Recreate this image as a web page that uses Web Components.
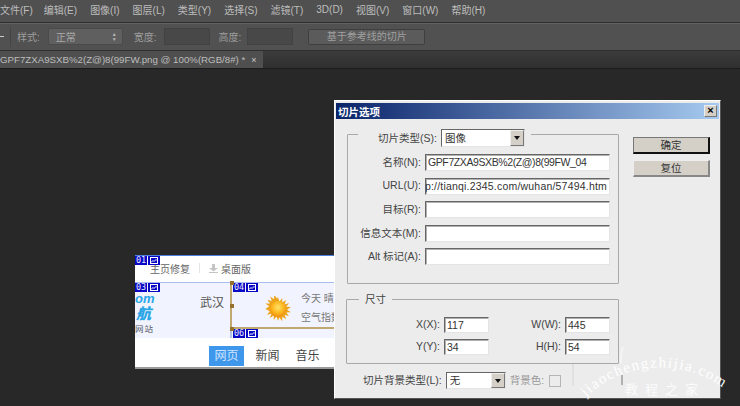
<!DOCTYPE html>
<html>
<head>
<meta charset="utf-8">
<title>切片选项</title>
<style>
  html, body { margin: 0; height: 100%; background: #282828; }
  body { width: 740px; height: 406px; overflow: hidden; font-family: "Liberation Sans", "Noto Sans CJK SC", sans-serif; display: flex; flex-direction: column; }
</style>
</head>
<body>
<ps-menubar>
  <ps-menu style="margin-right:-2px">文件(F)</ps-menu><ps-menu>编辑(E)</ps-menu><ps-menu>图像(I)</ps-menu><ps-menu>图层(L)</ps-menu><ps-menu>类型(Y)</ps-menu><ps-menu>选择(S)</ps-menu><ps-menu>滤镜(T)</ps-menu><ps-menu>3D(D)</ps-menu><ps-menu>视图(V)</ps-menu><ps-menu>窗口(W)</ps-menu><ps-menu>帮助(H)</ps-menu>
</ps-menubar>
<ps-options></ps-options>
<ps-tabbar>GPF7ZXA9SXB%2(Z@)8(99FW.png @ 100%(RGB/8#) *</ps-tabbar>
<ps-canvas>
  <slice-doc></slice-doc>
  <slice-dialog></slice-dialog>
  <water-mark></water-mark>
</ps-canvas>

<script>
  const CJK = `"Liberation Sans", "Noto Sans CJK SC", sans-serif`;

  customElements.define('ps-menu', class extends HTMLElement {
    connectedCallback() {
      this.attachShadow({mode: 'open'});
      this.shadowRoot.innerHTML = `
        <style>:host { display: block; white-space: nowrap; }</style>
        <slot></slot>`;
    }
  });

  customElements.define('ps-menubar', class extends HTMLElement {
    connectedCallback() {
      this.attachShadow({mode: 'open'});
      this.shadowRoot.innerHTML = `
        <style>
          :host {
            display: flex; flex: none; align-items: center; gap: 13px; box-sizing: border-box;
            height: 23px; padding-bottom: 3px;
            background: #505050; border-bottom: 1px solid #2e2e2e;
            color: #bdbdbd; font: 10px ${CJK};
          }
        </style>
        <slot></slot>`;
    }
  });

  customElements.define('ps-options', class extends HTMLElement {
    connectedCallback() {
      this.attachShadow({mode: 'open'});
      this.shadowRoot.innerHTML = `
        <style>
          :host {
            display: flex; flex: none; align-items: center; box-sizing: border-box;
            height: 28px; padding-bottom: 1px;
            background: #515151; border-bottom: 1px solid #2f2f2f; border-top: 1px solid #636363;
            color: #9d9d9d; font: 10px ${CJK};
          }
          .arrow { width: 4px; height: 1px; background: #ccc; }
          .sep { width: 1px; height: 20px; background: #444; margin: 0 6px; }
          .select {
            display: flex; justify-content: space-between; align-items: center; box-sizing: border-box;
            width: 75px; height: 17px; margin: 0 11px 0 8px; padding: 0 5px 0 7px;
            background: #5f5f5f; border: 1px solid #4a4a4a; border-radius: 2px; color: #aaa;
          }
          .spin { font-size: 5px; line-height: 5px; color: #b8b8b8; text-align: center; }
          .input { width: 44px; height: 15px; margin: 0 9px 0 7px; background: #484848; border: 1px solid #424242; }
          .input.last { margin: 0 15px 0 6px; }
          .btn {
            box-sizing: border-box; width: 117px; height: 16px; line-height: 14px; text-align: center;
            background: #5b5b5b; border: 1px solid #3f3f3f; border-radius: 2px; color: #a0a0a0;
          }
        </style>
        <div class="arrow"></div>
        <div class="sep"></div>
        <span>样式:</span>
        <div class="select"><span>正常</span><div class="spin">▲<br>▼</div></div>
        <span>宽度:</span><div class="input"></div>
        <span>高度:</span><div class="input last"></div>
        <div class="btn">基于参考线的切片</div>`;
    }
  });

  customElements.define('ps-tabbar', class extends HTMLElement {
    connectedCallback() {
      this.attachShadow({mode: 'open'});
      this.shadowRoot.innerHTML = `
        <style>
          :host {
            display: flex; flex: none; box-sizing: border-box; height: 18px;
            background: linear-gradient(#3c3c3c, #2f2f2f); border-bottom: 1px solid #1c1c1c;
          }
          .tab {
            display: flex; align-items: center; gap: 6px; height: 17px; box-sizing: border-box; padding: 0 6px 0 0;
            background: #4f4f4f; color: #bdbdbd; font: 9.7px ${CJK}; white-space: nowrap;
          }
          .x { font-size: 9px; color: #ccc; }
        </style>
        <div class="tab"><slot></slot><span class="x">×</span></div>`;
    }
  });

  // free canvas: the document and the dialog float over it like windows
  customElements.define('ps-canvas', class extends HTMLElement {
    connectedCallback() {
      this.attachShadow({mode: 'open'});
      this.shadowRoot.innerHTML = `
        <style>:host { display: block; position: relative; flex: 1; background: #282828; overflow: hidden; }</style>
        <slot></slot>`;
    }
  });

  customElements.define('slice-tag', class extends HTMLElement {
    connectedCallback() {
      this.attachShadow({mode: 'open'});
      this.shadowRoot.innerHTML = `
        <style>
          :host { display: flex; gap: 1px; position: absolute; height: 9px; font: 8.5px/9px "DejaVu Sans Mono", monospace; color: #e8e8ff; }
          div { background: #0808c4; width: 12px; text-align: center; overflow: hidden; }
          svg { display: block; margin: 1px 2px; }
        </style>
        <div><slot></slot></div>
        <div><svg width="8" height="7" viewBox="0 0 8 7" fill="none" stroke="#fff"><rect x=".5" y=".5" width="7" height="6"/><path d="M1 5.5l2-2 1 1 2-2 1 1"/></svg></div>`;
    }
  });

  customElements.define('slice-doc', class extends HTMLElement {
    connectedCallback() {
      this.attachShadow({mode: 'open'});
      this.shadowRoot.innerHTML = `
        <style>
          :host {
            position: absolute; left: 135px; top: 186px; width: 200px; height: 114px; overflow: hidden;
            background: #fff; display: grid; grid-template-rows: 26px 56px 1fr; font: 10px ${CJK}; color: #666;
            border-top: 1px solid #4d7fe0; box-sizing: border-box; border-bottom: 2px solid #9a9a9a;
          }
          .top { display: flex; align-items: center; padding: 0 0 2px 15px; gap: 9px; font-size: 10px; }
          .top i { width: 1px; height: 10px; background: #e4e4e4; }
          .top span { display: flex; align-items: center; gap: 3px; }
          .mid { display: grid; grid-template-columns: 97px 1fr; background: #f1f4fe; border-top: 1px solid #a9bdf0; position: relative; }
          .left { position: relative; border-right: 2px solid #b5c5e8; overflow: hidden; }
          .logo { position: absolute; left: 0; top: 9px; color: #2aa5e6; font: italic bold 13px/14px ${CJK}; white-space: nowrap; }
          .logo b { display: block; font-size: 15px; line-height: 15px; margin-left: 1px; }
          .site { position: absolute; left: 0; top: 39px; font-size: 8.5px; color: #556; letter-spacing: 1px; white-space: nowrap; }
          .city { position: absolute; right: 6px; top: 10px; font-size: 12px; color: #555; }
          .right { position: relative; border: 2px solid #c0a870; border-width: 0 0 2px 2px; margin: 0 0 9px -2px; display: flex; gap: 10px; padding: 13px 0 0 33px; }
          .info { font-size: 10px; line-height: 19px; white-space: nowrap; margin-top: -7px; color: #777; }
          .h { position: absolute; width: 4px; height: 4px; background: #96722c; }
          .bottom { display: flex; align-items: flex-end; font-size: 12px; color: #444; padding: 0 0 1px 74px; gap: 11px; }
          .bottom span { width: 29px; text-align: center; line-height: 20px; }
          .bottom .on { width: 35px; background: #3f97ec; color: #cfe4ff; margin-right: -2px; }
        </style>
        <div class="top"><span>主页修复</span><i></i><span>
          <svg width="9" height="9" viewBox="0 0 9 9" fill="#c4c4c4"><path d="M3 0h3v4h3L4.5 7.500 0 4h3zM0 8h9v1H0z"/></svg>桌面版</span></div>
        <div class="mid">
          <div class="left"><div class="logo">om<b>航</b></div><div class="site">网站</div><div class="city">武汉</div></div>
          <div class="right">
            <svg width="26" height="26" viewBox="0 0 26 26">
              <defs><radialGradient id="sun" cx=".5" cy=".4" r=".6"><stop offset="0" stop-color="#ffe36a"/><stop offset=".6" stop-color="#fdb71f"/><stop offset="1" stop-color="#ee8c10"/></radialGradient></defs>
              <path fill="#eda41d" d="M13 0l1.600 5 3-4.300.2 5.200 4.200-3-1.700 5 5-1.500-3.100 4.200 5.200.1-4.300 3 4.300 3-5.200.1 3.100 4.200-5-1.500 1.700 5-4.200-3-.2 5.200-3-4.300L13 26l-1.600-5-3 4.300-.2-5.200-4.200 3 1.700-5-5 1.500 3.100-4.200L-1 13l4.300-3L-1 7l5.200-.1L1.100 2.700l5 1.500L4.400-.8l4.200 3 .2-5.200 3 4.300z" transform="translate(1.300 1.300) scale(.9)"/>
              <circle cx="13" cy="13" r="8" fill="url(#sun)"/>
            </svg>
            <div class="info">今天 晴<br>空气指数</div>
          </div>
        </div>
        <div class="bottom"><span class="on">网页</span><span>新闻</span><span>音乐</span></div>
        <slice-tag style="left:0;top:0">01</slice-tag>
        <slice-tag style="left:0;top:27px">03</slice-tag>
        <slice-tag style="left:98px;top:27px">04</slice-tag>
        <slice-tag style="left:98px;top:73px">06</slice-tag>
        <div class="h" style="left:95px;top:25px"></div>
        <div class="h" style="left:95px;top:48px"></div>
        <div class="h" style="left:95px;top:71px"></div>`;
    }
  });

  customElements.define('win-field', class extends HTMLElement {
    connectedCallback() {
      const label = this.getAttribute('label');
      const w = this.getAttribute('width') || 185;
      const lw = this.getAttribute('label-width') || 74;
      const h = this.getAttribute('height') || 17;
      this.attachShadow({mode: 'open'});
      this.shadowRoot.innerHTML = `
        <style>
          :host { display: flex; align-items: center; gap: 4px; font: 10.5px ${CJK}; color: #444; }
          label { width: ${lw}px; text-align: right; white-space: nowrap; padding-bottom: 2px; }
          .box {
            display: flex; justify-content: var(--align, flex-start);
            box-sizing: border-box; width: ${w}px; height: ${h}px; padding: 0 2px; overflow: hidden; white-space: nowrap;
            background: #fff; border: 1px solid #e4e4e4; border-top-color: #666; border-left-color: #666;
            box-shadow: inset 1px 1px 0 #b0b0b0;
            color: #333; line-height: 14px; font-size: 10.5px; letter-spacing: var(--track, 0);
          }
        </style>
        <label>${label}</label><div class="box"><slot></slot></div>`;
    }
  });

  customElements.define('win-select', class extends HTMLElement {
    connectedCallback() {
      const w = this.getAttribute('width') || 85;
      const h = this.getAttribute('height') || 17;
      this.attachShadow({mode: 'open'});
      this.shadowRoot.innerHTML = `
        <style>
          :host {
            display: flex; box-sizing: border-box; width: ${w}px; height: ${h}px; background: #fff;
            border: 1px solid #e4e4e4; border-top-color: #666; border-left-color: #666;
            font: 10.5px/${h - 2}px ${CJK}; color: #333; padding-left: 3px;
          }
          span { flex: 1; }
          .btn {
            width: 14px; display: flex; align-items: center; justify-content: center; background: #d4d0c8;
            border: 1px solid #777; border-top-color: #eee; border-left-color: #eee; box-sizing: border-box;
          }
          .btn i { border: 3px solid transparent; border-top: 4px solid #111; border-bottom: 0; }
        </style>
        <span><slot></slot></span><div class="btn"><i></i></div>`;
    }
  });

  customElements.define('win-button', class extends HTMLElement {
    connectedCallback() {
      const dflt = this.hasAttribute('default');
      this.attachShadow({mode: 'open'});
      this.shadowRoot.innerHTML = `
        <style>
          :host {
            display: block; box-sizing: border-box; width: 77px; height: 17px; text-align: center;
            background: #d4d0c8; color: #333; font: 10.5px/15px ${CJK};
            border: solid; border-width: 1px 2px 2px 1px;
            border-color: ${dflt ? '#777 #111 #111 #777' : '#eee #888 #888 #eee'};
          }
        </style>
        <slot></slot>`;
    }
  });

  customElements.define('win-group', class extends HTMLElement {
    connectedCallback() {
      this.attachShadow({mode: 'open'});
      this.shadowRoot.innerHTML = `
        <style>
          :host { display: block; position: relative; box-sizing: border-box; border: 1px solid #a9a9a9; border-radius: 1px; }
          .legend {
            position: absolute; top: var(--legend-top, -9px); left: var(--legend-left, 12px);
            background: #ececec; padding: var(--legend-pad, 0 6px); display: flex; align-items: center; gap: 4px;
            font: 10.5px/17px ${CJK}; color: #444;
          }
        </style>
        <div class="legend"><slot name="legend"></slot></div>
        <slot></slot>`;
    }
  });

  customElements.define('slice-dialog', class extends HTMLElement {
    connectedCallback() {
      this.attachShadow({mode: 'open'});
      this.shadowRoot.innerHTML = `
        <style>
          :host {
            position: absolute; left: 334px; top: 31px; width: 387px; height: 299px; box-sizing: border-box;
            background: #ececec; border: 1px solid #fff; border-right-color: #555; border-bottom-color: #555;
            display: flex; flex-direction: column; padding: 2px 1px 1px; font: 10.5px ${CJK}; color: #444;
          }
          .title {
            display: flex; justify-content: space-between; align-items: center; flex: none; height: 16px; padding: 0 2px;
            background: linear-gradient(90deg, #0a246a, #a6caf0); color: #fff; font-weight: bold; font-size: 10.5px;
          }
          .close {
            width: 13px; height: 12px; box-sizing: border-box; background: #d4d0c8; border: 1px solid #777; border-top-color: #eee; border-left-color: #eee;
            color: #000; font: bold 11px/9px "Liberation Sans", sans-serif; text-align: center;
          }
          .body { flex: 1; display: grid; grid-template-columns: 286px 1fr; padding: 15px 0 0 11px; }
          .main { display: flex; flex-direction: column; }
          .first { width: 272px; height: 150px; --legend-top: -7px; --legend-left: 10px; --legend-pad: 0 6px 0 20px; }
          .first span { padding-top: 2px; }
          .fields { display: flex; flex-direction: column; gap: 6.5px; padding: 19px 8px 0 0; align-items: flex-end; }
          .size { width: 273px; height: 65px; margin: 15px 0 0 -1px; --legend-left: 12px; }
          .grid { display: grid; grid-template-columns: 142px 1fr; row-gap: 6px; padding: 17px 8px 0 0; }
          .grid win-field { justify-content: flex-end; }
          .bg { display: flex; align-items: center; padding: 8px 0 0 16px; gap: 4px; white-space: nowrap; }
          .bg span { padding-bottom: 2px; }
          .muted { color: #9a9a9a; }
          .check { width: 12px; height: 12px; border: 1px solid #b5b5b5; box-sizing: border-box; margin-left: 1px; }
          .side { display: flex; flex-direction: column; gap: 6px; padding-top: 3px; }
        </style>
        <div class="title"><span>切片选项</span><div class="close">×</div></div>
        <div class="body">
          <div class="main">
            <win-group class="first">
              <span slot="legend">切片类型(S):</span>
              <win-select slot="legend" width="84" height="18">图像</win-select>
              <div class="fields">
                <win-field label="名称(N):" style="--track:-.4px">GPF7ZXA9SXB%2(Z@)8(99FW_04</win-field>
                <win-field label="URL(U):" style="--track:.2px;--align:flex-end">p://tianqi.2345.com/wuhan/57494.htm</win-field>
                <win-field label="目标(R):"></win-field>
                <win-field label="信息文本(M):"></win-field>
                <win-field label="Alt 标记(A):"></win-field>
              </div>
            </win-group>
            <win-group class="size">
              <span slot="legend">尺寸</span>
              <div class="grid">
                <win-field label="X(X):" width="45" height="16" label-width="40">117</win-field>
                <win-field label="W(W):" width="45" height="16" label-width="40">445</win-field>
                <win-field label="Y(Y):" width="45" height="16" label-width="40">34</win-field>
                <win-field label="H(H):" width="45" height="16" label-width="40">54</win-field>
              </div>
            </win-group>
            <div class="bg">
              <span>切片背景类型(L):</span>
              <win-select width="60">无</win-select>
              <span class="muted">背景色:</span>
              <div class="check"></div>
            </div>
          </div>
          <div class="side">
            <win-button default>确定</win-button>
            <win-button>复位</win-button>
          </div>
        </div>`;
    }
  });

  // site watermark lying over the bottom right corner, curved text on an arc
  customElements.define('water-mark', class extends HTMLElement {
    connectedCallback() {
      this.attachShadow({mode: 'open'});
      this.shadowRoot.innerHTML = `
        <style>
          :host { position: absolute; inset: 0; pointer-events: none; }
          svg { display: block; }
          .en { font: 15px "Liberation Serif", serif; fill: #fff; letter-spacing: 1.5px; }
          .cn { font: 13px "Noto Sans CJK SC", sans-serif; fill: #fff; fill-opacity: .85; letter-spacing: 7px; }
        </style>
        <svg width="740" height="337" viewBox="0 69 740 337">
          <path d="M573 364v22" fill="none" stroke="#d4d4d4"/>
          <path d="M621 363q-1-8 2-16" fill="none" stroke="#f4f4f4" stroke-width="2"/>
          <path d="M622 375v10" fill="none" stroke="#777"/>
          <path id="arc" d="M586 397A107 107 0 0 1 734 397" fill="none"/>
          <text class="en"><textPath href="#arc">jiaochengzhijia.com</textPath></text>
          <text class="cn" x="625" y="394">教程之家</text>
        </svg>`;
    }
  });
</script>
</body>
</html>
